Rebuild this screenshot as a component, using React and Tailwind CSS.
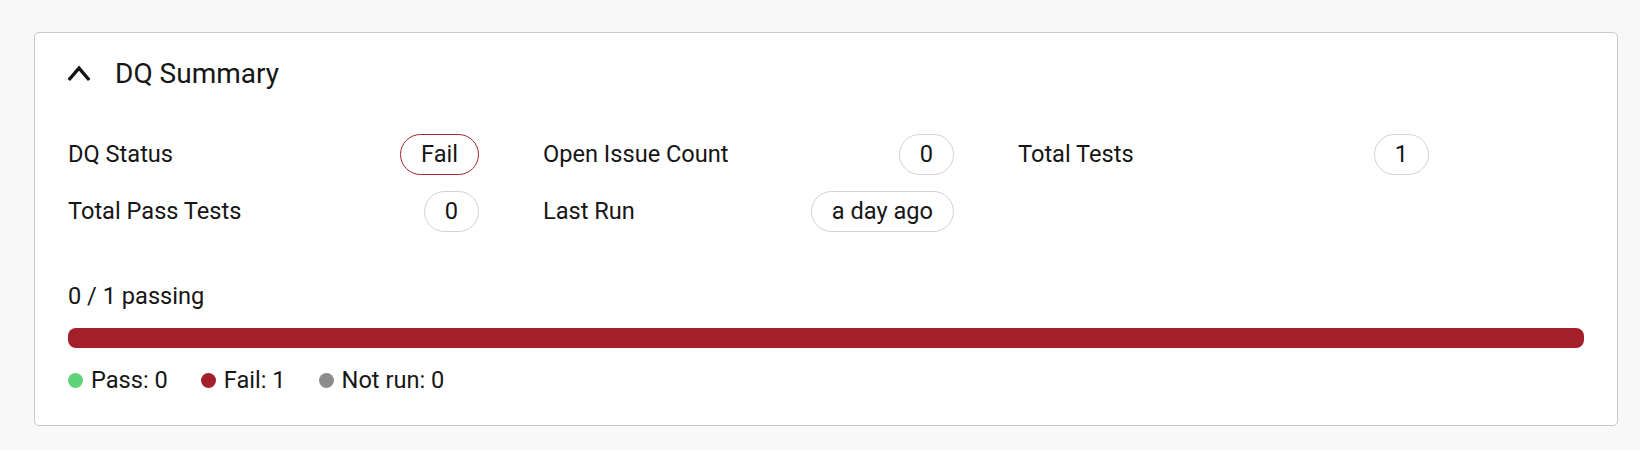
import React from "react";

const stats = [
  { label: "DQ Status", value: "Fail", tone: "fail" },
  { label: "Open Issue Count", value: "0" },
  { label: "Total Tests", value: "1" },
  { label: "Total Pass Tests", value: "0" },
  { label: "Last Run", value: "a day ago" },
];

const legend = [
  { label: "Pass: 0", dot: "bg-[#5fd37a]" },
  { label: "Fail: 1", dot: "bg-[#a31f29]" },
  { label: "Not run: 0", dot: "bg-[#8c8c8c]" },
];

function Chevron() {
  return (
    <svg width="24" height="20" viewBox="0 0 24 20" className="shrink-0">
      <polyline points="1.8,17 12,5.2 22.2,17" fill="none" stroke="#141414" strokeWidth="3.4" strokeLinejoin="miter" />
    </svg>
  );
}

function Badge({ value, tone }) {
  const border = tone === "fail" ? "border-[#a8232b]" : "border-[#d2d2d2]";
  return (
    <span className={`flex h-[41px] items-center rounded-full border px-[20px] ${border}`}>
      {value}
    </span>
  );
}

export default function App() {
  return (
    <div
      className="min-h-[450px] bg-[#f8f8f8] pl-[34px] pr-[22px] pt-[32px] text-[#161616]"
      style={{ fontFamily: "Roboto, 'Liberation Sans', sans-serif" }}
    >
      <div className="rounded-[5px] border border-[#c9c9c9] bg-white px-[33px] pb-[31px] pt-[21px]">
        <div className="flex h-[40px] items-center gap-[24px]">
          <div className="-ml-[1px] -mt-[2px]">
            <Chevron />
          </div>
          <h2 className="text-[28px] leading-none">DQ Summary</h2>
        </div>

        <div className="mt-[40px] grid grid-cols-[411px_411px_411px] gap-x-[64px] gap-y-[16px] text-[23.6px]">
          {stats.map((item) => (
            <div key={item.label} className="flex h-[41px] items-center justify-between">
              <span>{item.label}</span>
              <Badge value={item.value} tone={item.tone} />
            </div>
          ))}
        </div>

        <p className="mt-[50px] text-[23.6px] leading-[28px]">0 / 1 passing</p>
        <div className="mt-[18px] h-[20px] w-full rounded-[8px] bg-[#a31f29]" />

        <div className="mt-[18px] flex items-center gap-[33px] text-[23.6px] leading-[28px]">
          {legend.map((item) => (
            <div key={item.label} className="flex items-center gap-[8px]">
              <span className={`h-[15px] w-[15px] rounded-full ${item.dot}`} />
              <span>{item.label}</span>
            </div>
          ))}
        </div>
      </div>
    </div>
  );
}
